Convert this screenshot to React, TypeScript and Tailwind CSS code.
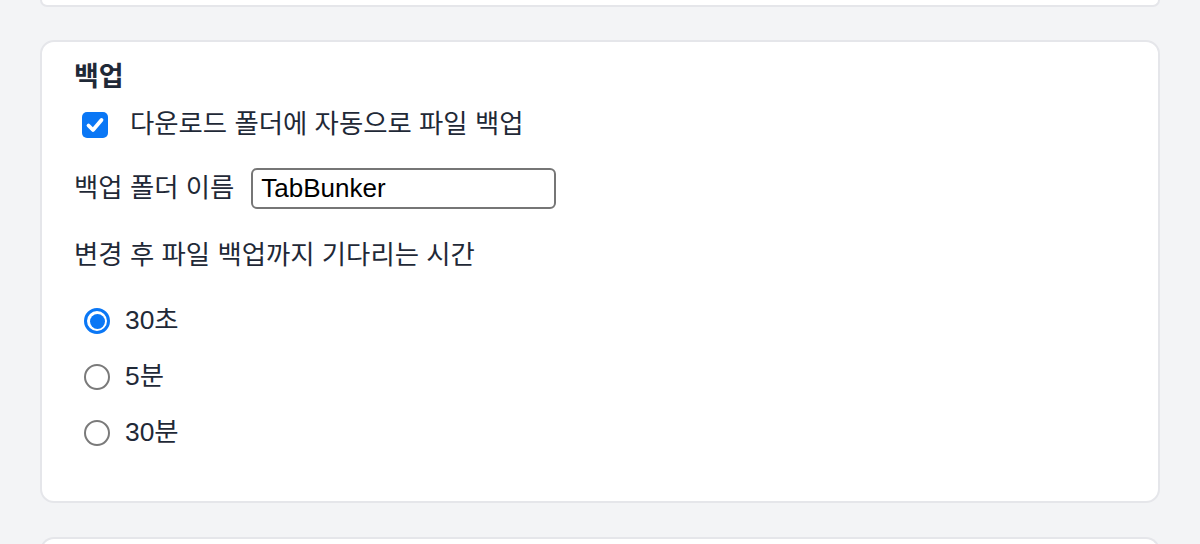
import { useState } from 'react';

const FONT = { fontFamily: '"Liberation Sans", "Noto Sans CJK KR", sans-serif' };

const DELAYS = [
  { id: '30s', label: '30초' },
  { id: '5m', label: '5분' },
  { id: '30m', label: '30분' },
];

function CheckBox({ checked, onToggle }: { checked: boolean; onToggle: () => void }) {
  return (
    <button
      type="button"
      onClick={onToggle}
      className={`ml-2 flex h-[26px] w-[26px] shrink-0 items-center justify-center rounded-[5px] ${
        checked ? 'bg-[#0a77f5]' : 'border-2 border-[#767676] bg-white'
      }`}
    >
      {checked && (
        <svg viewBox="0 0 26 26" className="h-[26px] w-[26px]">
          <path
            d="M6.5 13.5 L11 18 L19.5 8"
            fill="none"
            stroke="white"
            strokeWidth="3.8"
            strokeLinecap="round"
            strokeLinejoin="round"
          />
        </svg>
      )}
    </button>
  );
}

function Radio({ checked }: { checked: boolean }) {
  return checked ? (
    <span className="ml-[10px] flex h-[26px] w-[26px] shrink-0 items-center justify-center rounded-full border-[3px] border-[#0a77f5] bg-white">
      <span className="h-[15px] w-[15px] rounded-full bg-[#0a77f5]" />
    </span>
  ) : (
    <span className="ml-[10px] h-[26px] w-[26px] shrink-0 rounded-full border-2 border-[#7a7a7a] bg-white" />
  );
}

export default function App() {
  const [autoBackup, setAutoBackup] = useState(true);
  const [folder, setFolder] = useState('TabBunker');
  const [delay, setDelay] = useState('30s');

  return (
    <div className="h-[544px] overflow-hidden bg-[#f3f4f6] px-10 text-[#1f2937]" style={FONT}>
      {/* previous card, scrolled out of view */}
      <div className="h-[7px] rounded-b-[14px] border-x-2 border-b-2 border-[#e5e6ea] bg-white" />

      <section className="mt-[33px] rounded-[14px] border-2 border-[#e5e6ea] bg-white px-8 pt-5 pb-[53px]">
        <h2 className="text-[27px] font-bold leading-[31px]">백업</h2>

        <label className="mt-[19px] flex h-[26px] items-center gap-[22px] text-[26.4px]">
          <CheckBox checked={autoBackup} onToggle={() => setAutoBackup(!autoBackup)} />
          <span>다운로드 폴더에 자동으로 파일 백업</span>
        </label>

        <div className="mt-[30px] flex items-center gap-[17px] text-[26.4px]">
          <span>백업 폴더 이름</span>
          <input
            value={folder}
            onChange={(e) => setFolder(e.target.value)}
            className="h-[41px] w-[305px] rounded-[6px] border-2 border-[#767676] px-2 text-[26px] text-black outline-none"
            style={FONT}
          />
        </div>

        <p className="mt-[31px] text-[26.4px] leading-[30px]">변경 후 파일 백업까지 기다리는 시간</p>

        <div className="mt-9 flex flex-col gap-[26px]">
          {DELAYS.map((d) => (
            <label
              key={d.id}
              onClick={() => setDelay(d.id)}
              className="flex h-[30px] items-center gap-[15px] text-[26.4px]"
            >
              <Radio checked={delay === d.id} />
              <span>{d.label}</span>
            </label>
          ))}
        </div>
      </section>

      <div className="mt-[34px] h-[40px] rounded-t-[14px] border-x-2 border-t-2 border-[#e5e6ea] bg-white" />
    </div>
  );
}
